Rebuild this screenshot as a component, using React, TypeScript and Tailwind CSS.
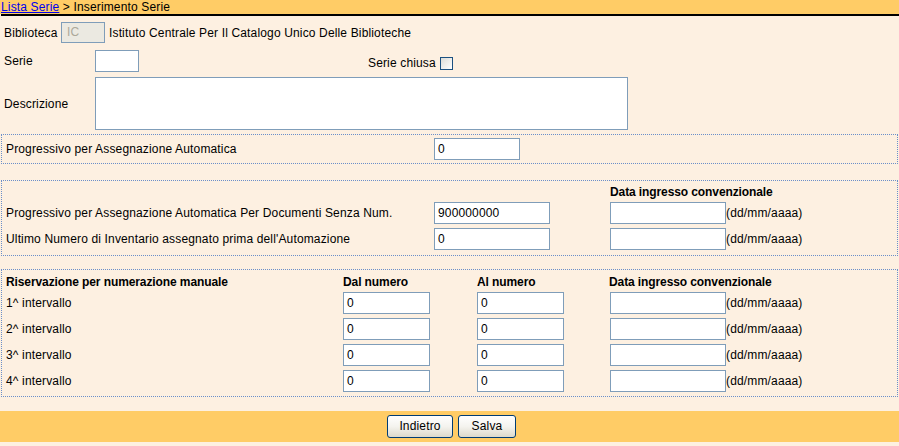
import React from 'react';

// Campo di testo in stile XP
const Field: React.FC<{ value?: string; w: string; disabled?: boolean }> = ({ value = '', w, disabled }) => (
  <div
    className={`${w} h-[22px] shrink-0 border border-[#7f9db9] px-[3px] leading-[20px] text-[12px] ${
      disabled ? 'bg-[#ebe9e1] text-[#a9a69a]' : 'bg-white text-black'
    }`}
  >
    {value}
  </div>
);

const DateField: React.FC = () => (
  <div className="flex items-center">
    <Field w="w-[116px]" />
    <span className="text-[12px]">(dd/mm/aaaa)</span>
  </div>
);

const XpButton: React.FC<{ label: string; w: string }> = ({ label, w }) => (
  <button
    className={`${w} h-[23px] rounded-[3px] border border-[#003c74] bg-gradient-to-b from-white via-[#f4f3ee] to-[#dcd9cb] text-[12px] text-black leading-[21px]`}
  >
    {label}
  </button>
);

const intervalli = ['1^ intervallo', '2^ intervallo', '3^ intervallo', '4^ intervallo'];

export default function App() {
  return (
    <div className="w-[899px] h-[446px] overflow-hidden bg-[#fdf0e1] font-['Liberation_Sans',Arial,sans-serif] text-[12px] tracking-[0.15px] text-black">
      {/* Breadcrumb */}
      <div className="h-[14px] bg-[#ffcc66] pl-[1px] leading-[14px]">
        <a className="text-[#0000ee] underline">Lista Serie</a>
        <span> &gt; Inserimento Serie</span>
      </div>
      <div className="h-[2px] ml-[1px] bg-black" />

      {/* Biblioteca */}
      <div className="mt-[6px] flex items-center h-[21px] pl-[4px]">
        <span className="w-[57px]">Biblioteca</span>
        <div className="w-[44px] h-[21px] border border-[#7f9db9] bg-[#ebe9e1] text-[#aca899] px-[5px] leading-[19px]">IC</div>
        <span className="ml-[4px]">Istituto Centrale Per Il Catalogo Unico Delle Biblioteche</span>
      </div>

      {/* Serie */}
      <div className="mt-[7px] flex items-center h-[22px] pl-[4px]">
        <span className="w-[91px]">Serie</span>
        <Field w="w-[44px]" />
        <div className="ml-[229px] mt-[4px] flex items-center">
          <span>Serie chiusa</span>
          <span className="ml-[4px] w-[13px] h-[13px] border border-[#1c5180] bg-gradient-to-br from-[#dcdcd7] to-white" />
        </div>
      </div>

      {/* Descrizione */}
      <div className="mt-[5px] flex items-center h-[53px] pl-[4px]">
        <span className="w-[91px]">Descrizione</span>
        <div className="w-[533px] h-[53px] border border-[#7f9db9] bg-white" />
      </div>

      {/* Progressivo */}
      <div className="mt-[4px] ml-[1px] mr-[1px] h-[30px] border border-dotted border-[#6b8fc9] flex items-center pl-[4px]">
        <span className="w-[428px]">Progressivo per Assegnazione Automatica</span>
        <Field w="w-[86px]" value="0" />
      </div>

      {/* Progressivo senza num. */}
      <div className="mt-[16px] ml-[1px] mr-[1px] border border-dotted border-[#6b8fc9] pl-[4px] pt-[1px] pb-[5px]">
        <div className="h-[20px] flex items-center">
          <span className="ml-[604px] font-bold tracking-[-0.1px]">Data ingresso convenzionale</span>
        </div>
        <div className="flex flex-col gap-[4px]">
          {[
            ['Progressivo per Assegnazione Automatica Per Documenti Senza Num.', '900000000'],
            ["Ultimo Numero di Inventario assegnato prima dell'Automazione", '0'],
          ].map(([label, val]) => (
            <div key={label} className="flex items-center h-[22px]">
              <span className="w-[428px]">{label}</span>
              <Field w="w-[116px]" value={val} />
              <span className="w-[60px]" />
              <DateField />
            </div>
          ))}
        </div>
      </div>

      {/* Riservazione */}
      <div className="mt-[13px] ml-[1px] mr-[1px] border border-dotted border-[#6b8fc9] pl-[4px] pt-[1px] pb-[4px]">
        <div className="h-[21px] flex items-center font-bold tracking-[-0.1px]">
          <span className="w-[337px]">Riservazione per numerazione manuale</span>
          <span className="w-[134px]">Dal numero</span>
          <span className="w-[132px]">Al numero</span>
          <span>Data ingresso convenzionale</span>
        </div>
        <div className="flex flex-col gap-[4px]">
          {intervalli.map((label) => (
            <div key={label} className="flex items-center h-[22px]">
              <span className="w-[337px]">{label}</span>
              <Field w="w-[87px]" value="0" />
              <span className="w-[47px]" />
              <Field w="w-[87px]" value="0" />
              <span className="w-[46px]" />
              <DateField />
            </div>
          ))}
        </div>
      </div>

      {/* Pulsanti */}
      <div className="mt-[14px] h-[31px] bg-[#ffcc66] flex items-center justify-center gap-[5px] pl-[4px]">
        <XpButton label="Indietro" w="w-[66px]" />
        <XpButton label="Salva" w="w-[58px]" />
      </div>
    </div>
  );
}
